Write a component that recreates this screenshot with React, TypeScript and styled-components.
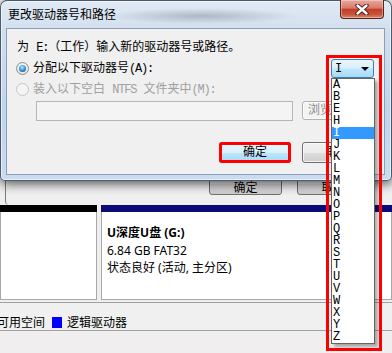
import React from 'react';
import styled, { createGlobalStyle } from 'styled-components';

const GlobalStyle = createGlobalStyle`
  html, body {
    margin: 0;
    padding: 0;
  }
  body {
    width: 392px;
    height: 353px;
    overflow: hidden;
    background: #f0f0f0;
    font-family: "Noto Sans", "Noto Sans CJK SC", sans-serif;
  }
`;

const Screen = styled.div`
  position: relative;
  width: 392px;
  height: 353px;
  overflow: hidden;
  background: #f0eeee;
`;

/* ---------- window behind (disk management) ---------- */

const BackWindow = styled.div`
  display: flex;
  flex-direction: column;
  height: 353px;
`;

const BackDialog = styled.div`
  height: 205px;
  margin-left: 5px;
  box-sizing: border-box;
  border-left: 1px solid #7d7d7d;
  border-bottom-left-radius: 4px;
  background: #f0f0f0;
  display: flex;
  align-items: flex-end;
  justify-content: flex-end;
  gap: 15px;
  padding: 0 22px 10px 0;
`;

const BackButton = styled.div`
  width: 73px;
  height: 23px;
  box-sizing: border-box;
  padding-top: 7px;
  border: 1px solid #707070;
  border-radius: 3px;
  background: linear-gradient(#f2f2f2 0%, #ebebeb 50%, #dddddd 51%, #cfcfcf 100%);
  text-align: center;
  font: 12px/14px "Noto Sans CJK SC", sans-serif;
  color: #000;
`;

const DiskRow = styled.div`
  display: flex;
  gap: 4px;
  height: 95px;
`;

const Partition = styled.div<{ $width?: string }>`
  display: flex;
  flex-direction: column;
  width: ${p => p.$width ?? 'auto'};
  flex: ${p => (p.$width ? 'none' : '1')};
`;

const PartBar = styled.div<{ $color: string }>`
  height: 7px;
  background: ${p => p.$color};
`;

const PartBody = styled.div`
  flex: 1;
  box-sizing: border-box;
  background: #fff;
  border: 1px solid #a7a7a7;
  border-top: none;
  padding: 12px 5px 0;
  font: 12px/17.5px "Noto Sans", "Noto Sans CJK SC", sans-serif;
  color: #000;
`;

const VolName = styled.div`
  font-weight: bold;
`;

const VolLine = styled.div``;

const Legend = styled.div`
  margin-top: 2px;
  height: 29px;
  box-sizing: border-box;
  border-top: 1px solid #a0a0a0;
  border-bottom: 1px solid #a0a0a0;
  background: #f0f0f0;
  padding-top: 11px;
  display: flex;
  align-items: center;
  font: 12px/14px "Noto Sans CJK SC", sans-serif;
  color: #000;
`;

const LegendText = styled.span<{ $shift?: number }>`
  margin-left: ${p => p.$shift ?? 0}px;
`;

const Swatch = styled.span<{ $color: string }>`
  width: 10px;
  height: 11px;
  margin: 0 5px 0 7px;
  background: ${p => p.$color};
`;

/* ---------- front dialog ---------- */

const Dialog = styled.div`
  position: absolute;
  top: 0;
  left: 0;
  z-index: 2;
  width: 392px;
  height: 181px;
  box-sizing: border-box;
  display: flex;
  flex-direction: column;
  border: 1px solid rgba(30, 45, 70, 0.75);
  border-radius: 7px 7px 5px 5px;
  background:
    radial-gradient(ellipse 95px 8px at 200px 15px, rgba(70, 80, 95, 0.3), transparent),
    linear-gradient(to bottom, #e1eaf5 0%, #d0deee 18%, #c0d5eb 60%, #cadcef 100%);
  box-shadow: 0 3px 11px rgba(0, 0, 0, 0.65), inset 0 0 0 1px rgba(255, 255, 255, 0.55);
`;

const TitleBar = styled.div`
  height: 27px;
  display: flex;
  align-items: flex-start;
  justify-content: space-between;
`;

const TitleText = styled.span`
  margin: 6px 0 0 7px;
  font: 12px/14px "Noto Sans CJK SC", sans-serif;
  color: #000;
`;

const CloseButton = styled.div`
  width: 44px;
  height: 19px;
  margin: -1px 7px 0 0;
  box-sizing: border-box;
  border: 1px solid #5b2219;
  border-top: none;
  border-radius: 0 0 4px 4px;
  background: linear-gradient(#e8a89d 0%, #d9796a 45%, #c43d26 52%, #c9533c 80%, #dc8a72 100%);
  box-shadow: inset 0 0 0 1px rgba(255, 255, 255, 0.35);
  display: flex;
  align-items: center;
  justify-content: center;
`;

const ClientArea = styled.div`
  height: 147px;
  margin: 0 6px 0 5px;
  box-sizing: border-box;
  border: 1px solid #8d9fb8;
  background: #f0f0f0;
  padding: 12px 10px 0 9px;
  display: flex;
  flex-direction: column;
  font: 12px/14px "Liberation Mono", "Noto Sans CJK SC", monospace;
  color: #000;
`;

const Latin = styled.span`
  letter-spacing: -1.2px;
`;

const Intro = styled.div`
  margin-left: 1px;
  height: 14px;
  white-space: nowrap;
`;

const OptionRow = styled.div<{ $gap: number }>`
  margin-top: ${p => p.$gap}px;
  height: 19px;
  display: flex;
  align-items: center;
`;

const Radio = styled.span<{ $checked?: boolean; $disabled?: boolean }>`
  position: relative;
  width: 13px;
  height: 13px;
  margin-right: 4px;
  box-sizing: border-box;
  border-radius: 50%;
  border: 1px solid ${p => (p.$disabled ? '#c5c5c5' : '#8e8f8f')};
  background: ${p =>
    p.$disabled
      ? '#f4f4f4'
      : 'radial-gradient(circle at 50% 40%, #ffffff 0, #e6e6e6 70%, #d2d2d2 100%)'};

  &::after {
    content: '';
    display: ${p => (p.$checked ? 'block' : 'none')};
    position: absolute;
    left: 2px;
    top: 2px;
    width: 7px;
    height: 7px;
    border-radius: 50%;
    background: radial-gradient(circle at 45% 35%, #c6ecff 0, #55b0e8 35%, #1b5e9e 80%, #16477a 100%);
  }
`;

const OptionLabel = styled.span<{ $disabled?: boolean }>`
  white-space: nowrap;
  color: ${p => (p.$disabled ? '#a0a0a0' : '#000')};
`;

const ComboWrap = styled.div`
  position: relative;
  margin-left: auto;
  width: 43px;
  height: 19px;
`;

const Combo = styled.div`
  height: 100%;
  box-sizing: border-box;
  border: 1px solid #3c7fb1;
  border-radius: 3px;
  background: linear-gradient(#eaf6fd 0%, #d9f0fc 45%, #bee6fd 55%, #a7d9f5 100%);
  display: flex;
  align-items: center;
  justify-content: space-between;
  padding: 0 4px 0 3px;
  font: 12px/14px "Liberation Mono", monospace;
`;

const Arrow = styled.span`
  width: 0;
  height: 0;
  border-left: 4px solid transparent;
  border-right: 4px solid transparent;
  border-top: 4px solid #000;
`;

const DropList = styled.ul`
  position: absolute;
  top: 100%;
  left: 0;
  width: 44px;
  margin: 0;
  padding: 0;
  list-style: none;
  box-sizing: border-box;
  border: 1px solid #646464;
  background: #fff;
  box-shadow: 3px 3px 3px rgba(0, 0, 0, 0.3);
`;

const DropItem = styled.li<{ $selected?: boolean }>`
  height: 12px;
  padding-left: 1px;
  font: 12px/12px "Liberation Mono", monospace;
  background: ${p => (p.$selected ? '#3399ff' : 'transparent')};
  color: ${p => (p.$selected ? '#fff' : '#000')};
`;

const Marker = styled.div`
  position: absolute;
  top: -4px;
  left: -5px;
  width: 56px;
  height: 296px;
  box-sizing: border-box;
  border: 3px solid #ff0000;
  pointer-events: none;
`;

const PathRow = styled.div`
  margin-top: 2px;
  padding-left: 20px;
  display: flex;
  align-items: flex-start;
  gap: 9px;
`;

const PathInput = styled.div`
  width: 257px;
  height: 20px;
  box-sizing: border-box;
  border: 1px solid #b5b5b5;
  background: #f4f4f4;
`;

const Button = styled.div<{ $primary?: boolean; $disabled?: boolean; $marked?: boolean }>`
  width: 72px;
  height: ${p => (p.$disabled ? 19 : 21)}px;
  box-sizing: border-box;
  border: 1px solid ${p => (p.$disabled ? '#adb2b5' : p.$primary ? '#3c7fb1' : '#707070')};
  border-radius: 3px;
  background: ${p =>
    p.$disabled
      ? '#f4f4f4'
      : p.$primary
      ? 'linear-gradient(#eaf6fd 0%, #d9f0fc 50%, #bee6fd 51%, #a7d9f5 100%)'
      : 'linear-gradient(#f2f2f2 0%, #ebebeb 50%, #dddddd 51%, #cfcfcf 100%)'};
  box-shadow: inset 0 0 0 1px rgba(255, 255, 255, 0.7);
  outline: ${p => (p.$marked ? '3px solid #ff0000' : 'none')};
  outline-offset: -3px;
  display: flex;
  align-items: center;
  justify-content: center;
  white-space: nowrap;
  font: 12px/14px "Liberation Mono", "Noto Sans CJK SC", monospace;
  color: ${p => (p.$disabled ? '#8a8a8a' : '#000')};
`;

const ButtonRow = styled.div`
  margin-top: 21px;
  display: flex;
  justify-content: flex-end;
  gap: 11px;
`;

const letters = ['A', 'B', 'E', 'H', 'I', 'J', 'K', 'L', 'M', 'N', 'O', 'P', 'Q', 'R', 'S', 'T', 'U', 'V', 'W', 'X', 'Y', 'Z'];

const CloseGlyph = () => (
  <svg width="14" height="11" viewBox="0 0 14 11">
    <path d="M2.5 1.5 L11.5 9.5 M11.5 1.5 L2.5 9.5" stroke="#3b1510" strokeWidth="4.2" strokeLinecap="round" />
    <path d="M2.5 1.5 L11.5 9.5 M11.5 1.5 L2.5 9.5" stroke="#ffffff" strokeWidth="2.4" strokeLinecap="round" />
  </svg>
);

export default function App() {
  const selected = 'I';

  return (
    <>
      <GlobalStyle />
      <Screen>
        <BackWindow>
          <BackDialog>
            <BackButton>确定</BackButton>
            <BackButton>取消</BackButton>
          </BackDialog>
          <DiskRow>
            <Partition $width="97px">
              <PartBar $color="#000000" />
              <PartBody />
            </Partition>
            <Partition>
              <PartBar $color="#0a0a78" />
              <PartBody>
                <VolName>U深度U盘 (G:)</VolName>
                <VolLine>6.84 GB FAT32</VolLine>
                <VolLine>状态良好 (活动, 主分区)</VolLine>
              </PartBody>
            </Partition>
          </DiskRow>
          <Legend>
            <LegendText $shift={-3}>可用空间</LegendText>
            <Swatch $color="#0000ff" />
            <LegendText>逻辑驱动器</LegendText>
          </Legend>
        </BackWindow>

        <Dialog>
          <TitleBar>
            <TitleText>更改驱动器号和路径</TitleText>
            <CloseButton>
              <CloseGlyph />
            </CloseButton>
          </TitleBar>
          <ClientArea>
            <Intro>
              为 <Latin>E:</Latin>（工作）输入新的驱动器号或路径。
            </Intro>
            <OptionRow $gap={4}>
              <Radio $checked />
              <OptionLabel>
                分配以下驱动器号<Latin>(A):</Latin>
              </OptionLabel>
              <ComboWrap>
                <Combo>
                  <span>{selected}</span>
                  <Arrow />
                </Combo>
                <DropList>
                  {letters.map(l => (
                    <DropItem key={l} $selected={l === selected}>
                      {l}
                    </DropItem>
                  ))}
                </DropList>
                <Marker />
              </ComboWrap>
            </OptionRow>
            <OptionRow $gap={2}>
              <Radio $disabled />
              <OptionLabel $disabled>
                装入以下空白 <Latin>NTFS</Latin> 文件夹中<Latin>(M):</Latin>
              </OptionLabel>
            </OptionRow>
            <PathRow>
              <PathInput />
              <Button $disabled>
                浏览<Latin>(B)...</Latin>
              </Button>
            </PathRow>
            <ButtonRow>
              <Button $primary $marked>确定</Button>
              <Button>取消</Button>
            </ButtonRow>
          </ClientArea>
        </Dialog>
      </Screen>
    </>
  );
}
